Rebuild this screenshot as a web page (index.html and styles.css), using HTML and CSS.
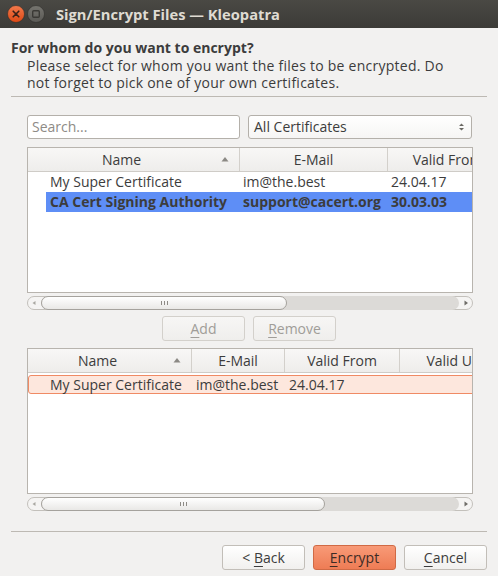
FILE: index.html
```html
<!DOCTYPE html>
<html>
<head>
<meta charset="utf-8">
<link rel="stylesheet" href="styles.css">
</head>
<body>
<div class="titlebar">
  <svg class="wbtn" width="18" height="18" viewBox="0 0 18 18">
    <defs><linearGradient id="cg" x1="0" y1="0" x2="0" y2="1"><stop offset="0" stop-color="#f37a4c"/><stop offset="1" stop-color="#dd4814"/></linearGradient></defs>
    <circle cx="9" cy="9" r="8.5" fill="url(#cg)" stroke="#2e2d2a" stroke-width="0.6"/>
    <path d="M6.2 6.2 L11.8 11.8 M11.8 6.2 L6.2 11.8" stroke="#3a2118" stroke-width="1.6" stroke-linecap="round"/>
  </svg>
  <svg class="wbtn" width="18" height="18" viewBox="0 0 18 18">
    <defs><linearGradient id="mg" x1="0" y1="0" x2="0" y2="1"><stop offset="0" stop-color="#76756f"/><stop offset="1" stop-color="#5a5955"/></linearGradient></defs>
    <circle cx="9" cy="9" r="8.5" fill="url(#mg)" stroke="#2e2d2a" stroke-width="0.6"/>
    <rect x="5.7" y="5.7" width="6.6" height="6.6" rx="1" fill="none" stroke="#3a3935" stroke-width="1.4"/>
  </svg>
  <div class="title">Sign/Encrypt Files — Kleopatra</div>
</div>
<div class="main">
  <div class="heading">For whom do you want to encrypt?</div>
  <div class="desc">
    <div class="dl">Please select for whom you want the files to be encrypted. Do</div>
    <div class="dl">not forget to pick one of your own certificates.</div>
  </div>
  <div class="sep"></div>
  <div class="inner">
    <div class="filters">
      <div class="search"><span class="ph">Search...</span></div>
      <div class="combo"><span>All Certificates</span>
        <svg width="7" height="10" viewBox="0 0 7 10"><path d="M1 4 L3.5 1.5 L6 4 Z M1 6 L3.5 8.5 L6 6 Z" fill="#6b6964"/></svg>
      </div>
    </div>

    <div class="table t1">
      <div class="hrow">
        <div class="hc c1a">Name<svg class="sort" width="8" height="6" viewBox="0 0 8 6"><path d="M0.5 5.5 L4 1 L7.5 5.5 Z" fill="#8b8984"/></svg></div>
        <div class="hc c1b">E-Mail</div>
        <div class="hc c1c">Valid From</div>
      </div>
      <div class="row">
        <div class="cell c1a name">My Super Certificate</div>
        <div class="cell c1b">im@the.best</div>
        <div class="cell c1c">24.04.17</div>
      </div>
      <div class="row sel">
        <div class="cell c1a name"><span class="selfill">CA Cert Signing Authority</span></div>
        <div class="cell c1b">support@cacert.org</div>
        <div class="cell c1c">30.03.03</div>
      </div>
    </div>
    <div class="hscroll">
      <svg class="arr" width="6" height="6" viewBox="0 0 6 6"><path d="M4.5 1 L1.5 3 L4.5 5 Z" fill="#a9a7a2"/></svg>
      <div class="track"><div class="slider s1"><span class="grip"></span></div></div>
      <svg class="arr" width="6" height="6" viewBox="0 0 6 6"><path d="M1.5 0.5 L5 3 L1.5 5.5 Z" fill="#6f6d68"/></svg>
    </div>

    <div class="midbtns">
      <div class="btn dis"><span class="u">A</span>dd</div>
      <div class="btn dis"><span class="u">R</span>emove</div>
    </div>

    <div class="table t2">
      <div class="hrow">
        <div class="hc c2a">Name<svg class="sort" width="8" height="6" viewBox="0 0 8 6"><path d="M0.5 5.5 L4 1 L7.5 5.5 Z" fill="#8b8984"/></svg></div>
        <div class="hc c2b">E-Mail</div>
        <div class="hc c2c">Valid From</div>
        <div class="hc c2d">Valid Until</div>
      </div>
      <div class="row cur">
        <div class="cell c2a name">My Super Certificate</div>
        <div class="cell c2b">im@the.best</div>
        <div class="cell c2c">24.04.17</div>
        <div class="cell c2d"></div>
      </div>
    </div>
    <div class="hscroll">
      <svg class="arr" width="6" height="6" viewBox="0 0 6 6"><path d="M4.5 1 L1.5 3 L4.5 5 Z" fill="#a9a7a2"/></svg>
      <div class="track"><div class="slider s2"><span class="grip"></span></div></div>
      <svg class="arr" width="6" height="6" viewBox="0 0 6 6"><path d="M1.5 0.5 L5 3 L1.5 5.5 Z" fill="#6f6d68"/></svg>
    </div>
  </div>
  <div class="sep bottom"></div>
  <div class="footer">
    <div class="btn">&lt; <span class="u">B</span>ack</div>
    <div class="btn primary"><span class="u">E</span>ncrypt</div>
    <div class="btn"><span class="u">C</span>ancel</div>
  </div>
</div>
</body>
</html>
```
FILE: styles.css
```css
* { box-sizing: border-box; }
body {
  margin: 0;
  width: 498px;
  height: 576px;
  overflow: hidden;
  background: #f2f1f0;
  font-family: "Open Sans", "DejaVu Sans", sans-serif;
  font-size: 14px;
  color: #3c3c3c;
}
.titlebar {
  height: 28px;
  background: linear-gradient(#4a4944, #3c3b37);
  display: flex;
  align-items: center;
  padding-left: 7px;
  gap: 2px;
}
.wbtn { display: block; }
.title {
  margin-left: 9px;
  color: #dfdbd2;
  font-weight: bold;
  font-size: 14.7px;
}
.main { padding: 11px 11px 0 11px; }
.heading { font-weight: bold; line-height: 17px; }
.desc { padding-left: 16px; margin-top: 1px; font-size: 14px; letter-spacing: 0.25px; }
.dl { height: 17px; line-height: 17px; }
.sep { border-top: 1px solid #bdb9b3; margin-top: 5px; }
.inner { padding: 0 14px 0 16px; }
.filters { display: flex; gap: 8px; margin-top: 18px; }
.search {
  width: 213px;
  height: 24px;
  border: 1px solid #b4b0aa;
  border-radius: 3px;
  background: #fff;
  padding: 2px 4px;
  line-height: 18px;
}
.ph { color: #8e8b86; }
.combo {
  width: 224px;
  height: 24px;
  border: 1px solid #b4b0aa;
  border-radius: 3px;
  background: linear-gradient(#ffffff, #f6f5f4);
  padding: 2px 6px 2px 5px;
  line-height: 18px;
  display: flex;
  justify-content: space-between;
  align-items: center;
}
.table {
  border: 1px solid #b8b4ae;
  background: #fff;
  overflow: hidden;
  height: 146px;
}
.t1 { margin-top: 8px; }
.t2 { margin-top: 7px; }
.hrow {
  display: flex;
  height: 24px;
  background: linear-gradient(#f8f7f6, #eeedeb);
  border-bottom: 1px solid #cfccc7;
  white-space: nowrap;
}
.hc {
  flex: none;
  position: relative;
  text-align: center;
  line-height: 23px;
  border-right: 1px solid #d3d0cb;
}
.sort { position: absolute; right: 10px; top: 8px; }
.row { display: flex; height: 20px; line-height: 20px; white-space: nowrap; }
.cell { flex: none; padding-left: 3px; overflow: visible; }
.name { padding-left: 22px; }
.c1a { width: 212px; }
.c1b { width: 148px; }
.c1c { width: 120px; }
.c2a { width: 164px; }
.c2b { width: 93px; }
.c2c { width: 115px; }
.c2d { width: 120px; }
.t1 .hc.c1a { padding-right: 24px; }
.t2 .hc.c2a { padding-right: 24px; }
.sel { font-weight: bold; }
.sel .cell { background: #5e8ef6; }
.sel .cell.name { background: #fff; padding-left: 18px; }
.selfill { display: block; background: #5e8ef6; padding-left: 4px; }
.cur {
  width: calc(100% + 6px);
  background: #fde7dd;
  border: 1px solid #f08a64;
  border-radius: 3px;
  margin: 2px 0 0 0;
  height: 19px;
  line-height: 17px;
}
.cur .name { padding-left: 21px; }
.hscroll {
  margin-top: 3px;
  height: 14px;
  border: 1px solid #c3c0bb;
  border-radius: 7px;
  background: #f5f4f3;
  display: flex;
  align-items: center;
  padding: 0 3px 0 3px;
  gap: 2px;
}
.arr { flex: none; }
.track {
  flex: 1;
  height: 14px;
  background: #dcdad7;
  border-radius: 7px;
  margin: 0 2px;
  position: relative;
}
.slider {
  height: 14px;
  border: 1px solid #a5a29d;
  border-radius: 7px;
  background: linear-gradient(#ffffff, #e9e8e6);
  display: flex;
  align-items: center;
  justify-content: center;
}
.s1 { width: 246px; }
.s2 { width: 284px; }
.grip {
  width: 7px;
  height: 4px;
  border-left: 1px solid #8e8b86;
  border-right: 1px solid #8e8b86;
  position: relative;
}
.grip::after {
  content: "";
  position: absolute;
  left: 2px;
  top: 0;
  width: 1px;
  height: 4px;
  background: #8e8b86;
}
.midbtns { display: flex; justify-content: center; gap: 8px; margin-top: 6px; padding-right: 2px; }
.btn {
  width: 83px;
  height: 25px;
  border: 1px solid #c2beb8;
  border-radius: 3px;
  background: linear-gradient(#ffffff, #f1f0ee);
  text-align: center;
  line-height: 23px;
  color: #3c3c3c;
}
.btn.dis { color: #a09d98; border-color: #d3d0cb; background: linear-gradient(#f7f6f5, #efeeec); }
.u { text-decoration: underline; text-underline-offset: 3px; }
.primary {
  background: linear-gradient(#f89a77, #ee7c55);
  border-color: #d06a45;
  color: #3c2b25;
}
.sep.bottom { margin-top: 20px; }
.footer { display: flex; justify-content: flex-end; gap: 8px; margin-top: 13px; }
```
